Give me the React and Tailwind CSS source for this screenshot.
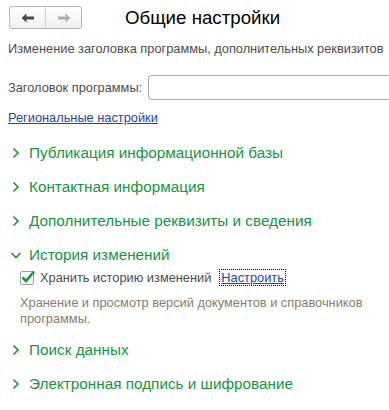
const GREEN = '#15963f';

const Chevron = ({ open }) =>
  open ? (
    <svg width="12" height="12" viewBox="0 0 12 12" className="shrink-0">
      <path d="M1.5 4L6 8.5L10.5 4" fill="none" stroke={GREEN} strokeWidth="1.6" />
    </svg>
  ) : (
    <svg width="12" height="12" viewBox="0 0 12 12" className="shrink-0">
      <path d="M3.5 1.5L8 6L3.5 10.5" fill="none" stroke={GREEN} strokeWidth="1.6" />
    </svg>
  );

const Group = ({ title, open }) => (
  <div className="flex h-[34px] items-center gap-[7px] pl-[10px]">
    <Chevron open={open} />
    <span className="text-[15.3px] text-[#15963f]">{title}</span>
  </div>
);

export default function App() {
  return (
    <div
      className="h-[410px] w-[389px] overflow-hidden bg-white"
      style={{ fontFamily: '"Liberation Sans", Arial, sans-serif' }}
    >
      {/* Header */}
      <div className="flex items-center pt-[6px]">
        <div className="ml-[9px] flex h-[23px] w-[73px] rounded-[3px] border border-[#b5b5b5] bg-gradient-to-b from-white to-[#f0f0f0]">
          <div className="flex w-[36px] items-center justify-center border-r border-[#d0d0d0]">
            <svg width="14" height="10" viewBox="0 0 14 10">
              <path d="M0.5 5L5.5 0.5V3.5H13V6.5H5.5V9.5Z" fill="#4a4a4a" />
            </svg>
          </div>
          <div className="flex flex-1 items-center justify-center">
            <svg width="14" height="10" viewBox="0 0 14 10">
              <path d="M13.5 5L8.5 0.5V3.5H1V6.5H8.5V9.5Z" fill="#b0b0b0" />
            </svg>
          </div>
        </div>
        <div className="ml-[43px] text-[18.7px] leading-[22px] text-black">Общие настройки</div>
      </div>

      <div className="mt-[12px] pl-[8px] text-[12.8px] leading-[16px] text-[#4d4d4d]">
        Изменение заголовка программы, дополнительных реквизитов
      </div>

      <div className="mt-[18px] flex items-center">
        <span className="pl-[8px] text-[12.8px] text-[#4d4d4d]">Заголовок программы:</span>
        <div className="ml-[6px] h-[25px] flex-1 rounded-l-[4px] border border-r-0 border-[#a8a8a8] bg-white" />
      </div>

      <div className="mt-[10px] pl-[8px] text-[12.8px] leading-[16px]">
        <a className="text-[#2346a8] underline">Региональные настройки</a>
      </div>

      <div className="mt-[10px]">
        <Group title="Публикация информационной базы" />
        <Group title="Контактная информация" />
        <Group title="Дополнительные реквизиты и сведения" />
        <Group title="История изменений" open />
      </div>

      <div className="-mt-[4px] flex items-center pl-[20px]">
        <div className="relative h-[14px] w-[14px] rounded-[2px] border border-[#a0a0a0] bg-white">
          <svg width="16" height="16" viewBox="0 0 16 16" className="absolute -left-[1px] -top-[3px]">
            <path d="M2.5 8.5L6 12L14 2.5" fill="none" stroke="#1a9a3a" strokeWidth="2.6" />
          </svg>
        </div>
        <span className="ml-[6px] text-[12.8px] text-[#4d4d4d]">Хранить историю изменений</span>
        <span className="ml-[8px] border border-dotted border-black px-[1px] text-[12.8px] leading-[15px] text-[#2346a8] underline">
          Настроить
        </span>
      </div>

      <div className="mt-[8px] pl-[20px] pr-[20px] text-[12.8px] leading-[16px] text-[#877d70]">
        Хранение и просмотр версий документов и справочников программы.
      </div>

      <div className="mt-[6px]">
        <Group title="Поиск данных" />
        <Group title="Электронная подпись и шифрование" />
      </div>
    </div>
  );
}
